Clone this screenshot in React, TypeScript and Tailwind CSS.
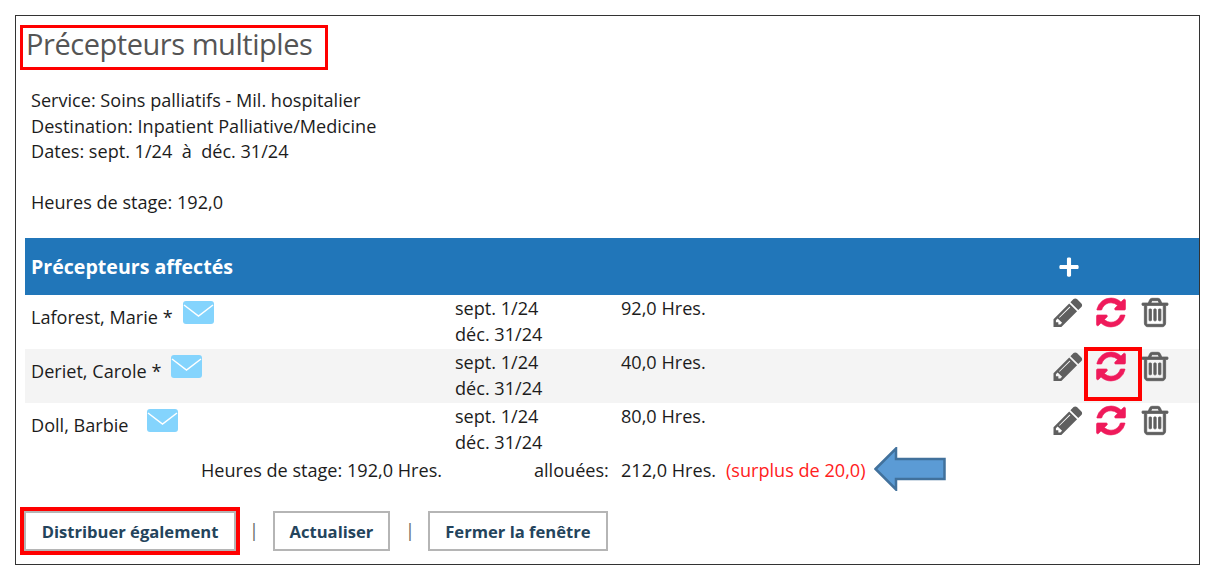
import { FaPlus } from 'react-icons/fa';

interface Row {
    name: string;
    hours: string;
    mailOffset: string;
    shaded: boolean;
    highlight: boolean;
    height: string;
}

const rows: Row[] = [
    { name: 'Laforest, Marie *', hours: '92,0 Hres.', mailOffset: 'ml-[10px]', shaded: false, highlight: false, height: 'h-[54px]' },
    { name: 'Deriet, Carole *', hours: '40,0 Hres.', mailOffset: 'ml-[10px]', shaded: true, highlight: true, height: 'h-[54px]' },
    { name: 'Doll, Barbie', hours: '80,0 Hres.', mailOffset: 'ml-[19px]', shaded: false, highlight: false, height: 'h-[53px]' },
];

function MailIcon({ className }: { className: string }) {
    return (
        <svg viewBox="0 0 31 23" className={className}>
            <rect width="31" height="23" rx="3" fill="#84d4fd" />
            <path d="M1 4 L15.5 15 L30 4" fill="none" stroke="#ffffff" strokeWidth="1.5" />
        </svg>
    );
}

function PencilIcon() {
    return (
        <svg viewBox="128 128 1536 1536" className="h-[29px] w-[30px] fill-[#5f5f5f]">
            <path d="M491 1536l91-91-235-235-91 91v107h128v128h107zm523-928q0-22-22-22-10 0-17 7l-542 542q-7 7-7 17 0 22 22 22 10 0 17-7l542-542q7-7 7-17zm-54-192l416 416-832 832h-416v-416zm683 96q0 53-37 90l-166 166-416-416 166-165q36-38 90-38 53 0 91 38l235 234q37 39 37 91z" />
        </svg>
    );
}

function RefreshIcon() {
    return (
        <svg viewBox="128 128 1536 1536" className="ml-[13px] h-[29px] w-[30px] overflow-visible fill-[#ef1a5b] stroke-[#ef1a5b] stroke-[30]">
            <path d="M1639 1056q0 5-1 7-64 268-268 434.5t-478 166.5q-146 0-282.5-55t-243.5-157l-129 129q-19 19-45 19t-45-19-19-45v-448q0-26 19-45t45-19h448q26 0 45 19t19 45-19 45l-137 137q71 66 161 102t187 36q134 0 250-65t186-179q11-17 53-117 8-23 30-23h192q13 0 22.5 9.5t9.5 22.5zm25-800v448q0 26-19 45t-45 19h-448q-26 0-45-19t-19-45 19-45l138-138q-148-137-349-137-134 0-250 65t-186 179q-11 17-53 117-8 23-30 23h-199q-13 0-22.5-9.5t-9.5-22.5v-7q65-268 270-434.5t480-166.5q146 0 284 55.5t245 156.5l130-129q19-19 45-19t45 19 19 45z" />
        </svg>
    );
}

function TrashIcon() {
    return (
        <svg viewBox="192 128 1408 1536" className="ml-[16px] h-[29px] w-[26px] overflow-visible fill-[#5f5f5f] stroke-[#5f5f5f] stroke-[45]">
            <path d="M704 736v576q0 14-9 23t-23 9h-64q-14 0-23-9t-9-23v-576q0-14 9-23t23-9h64q14 0 23 9t9 23zm256 0v576q0 14-9 23t-23 9h-64q-14 0-23-9t-9-23v-576q0-14 9-23t23-9h64q14 0 23 9t9 23zm256 0v576q0 14-9 23t-23 9h-64q-14 0-23-9t-9-23v-576q0-14 9-23t23-9h64q14 0 23 9t9 23zm128 724v-948h-896v948q0 22 7 40.5t14.5 27 10.5 8.5h832q3 0 10.5-8.5t14.5-27 7-40.5zm-672-1076h448l-48-117q-7-9-17-11h-317q-10 2-17 11zm928 32v64q0 14-9 23t-23 9h-96v948q0 83-47 143.5t-113 60.5h-832q-66 0-113-58.5t-47-141.5v-952h-96q-14 0-23-9t-9-23v-64q0-14 9-23t23-9h309l70-167q15-37 54-63t79-26h320q40 0 79 26t54 63l70 167h309q14 0 23 9t9 23z" />
        </svg>
    );
}

function ArrowIcon() {
    return (
        <svg viewBox="0 0 72 44" className="-mt-[5px] h-[44px] w-[72px] shrink-0">
            <path
                d="M1.5 22 L22 1.5 V12 H70.5 V32 H22 V42.5 Z"
                fill="#5b9bd5"
                stroke="#41719c"
                strokeWidth="2.5"
            />
        </svg>
    );
}

export default function App() {
    return (
        <div className="h-[573px] w-[1210px] overflow-hidden bg-white pl-[15px] pt-[15px] font-['Open_Sans',sans-serif] text-[18.1px] text-[#1c1c1c]">
            <div className="h-[550px] w-[1185px] border border-[#333333] pl-[5px] pt-[9px]">
                <div className="-ml-[1px] flex h-[45px] w-[308px] items-center border-[3px] border-[#ff0000] pb-[8px] pl-[3px]">
                    <h1 className="text-[29px] leading-none tracking-[-0.45px] text-[#555555]">Précepteurs multiples</h1>
                </div>

                <div className="ml-[10px] mt-[18px] h-[150px] leading-[25.5px]">
                    <p>Service: Soins palliatifs - Mil. hospitalier</p>
                    <p>Destination: Inpatient Palliative/Medicine</p>
                    <p className="whitespace-pre">Dates: sept. 1/24  à  déc. 31/24</p>
                    <p className="mt-[25px]">Heures de stage: 192,0</p>
                </div>

                <div className="ml-[4px]">
                    <div className="flex h-[57px] items-center justify-between bg-[#2176b9] pl-[6px] pr-[119px]">
                        <span className="text-[19.6px] font-bold text-white">Précepteurs affectés</span>
                        <FaPlus className="h-[22px] w-[22px] text-white" />
                    </div>

                    {rows.map((row) => (
                        <div
                            key={row.name}
                            className={`flex pl-[6px] ${row.height} ${row.shaded ? 'bg-[#f4f4f4]' : 'bg-white'}`}
                        >
                            <div className="flex w-[424px] items-start pt-[9px]">
                                <span className="whitespace-pre">{row.name}</span>
                                <MailIcon className={`-mt-[3px] h-[23px] w-[31px] ${row.mailOffset}`} />
                            </div>
                            <div className="w-[166px] pt-[1px] leading-[25.5px]">
                                <p>sept. 1/24</p>
                                <p>déc. 31/24</p>
                            </div>
                            <div className="w-[432px] pt-[1px] leading-[25.5px]">{row.hours}</div>
                            <div className="relative flex items-start pt-[3px]">
                                <PencilIcon />
                                <RefreshIcon />
                                <TrashIcon />
                                {row.highlight && (
                                    <div className="absolute left-[31px] top-[-2px] h-[54px] w-[58px] border-[4px] border-[#ff0000]" />
                                )}
                            </div>
                        </div>
                    ))}

                    <div className="flex h-[30px] items-center pl-[176px]">
                        <span className="w-[333px]">Heures de stage: 192,0 Hres.</span>
                        <span className="w-[87px]">allouées:</span>
                        <span className="w-[105px]">212,0 Hres.</span>
                        <span className="whitespace-nowrap text-[#ff2020]">(surplus de 20,0)</span>
                        <span className="ml-[8px] flex">
                            <ArrowIcon />
                        </span>
                    </div>
                </div>

                <div className="-ml-[1px] mt-[21px] flex items-center">
                    <div className="border-[4px] border-[#ff0000]">
                        <button className="block h-[40px] w-[212px] border-2 border-[#b5b5b5] bg-white pt-[2px] text-[16.6px] font-bold text-[#24445c]">
                            Distribuer également
                        </button>
                    </div>
                    <span className="ml-[9px] text-[#666666]">|</span>
                    <button className="ml-[14px] h-[40px] w-[117px] border-2 border-[#b5b5b5] bg-white pt-[2px] text-[16.6px] font-bold text-[#24445c]">
                        Actualiser
                    </button>
                    <span className="ml-[15px] text-[#666666]">|</span>
                    <button className="ml-[13px] h-[40px] w-[180px] border-2 border-[#b5b5b5] bg-white pt-[2px] text-[16.6px] font-bold text-[#24445c]">
                        Fermer la fenêtre
                    </button>
                </div>
            </div>
        </div>
    );
}
